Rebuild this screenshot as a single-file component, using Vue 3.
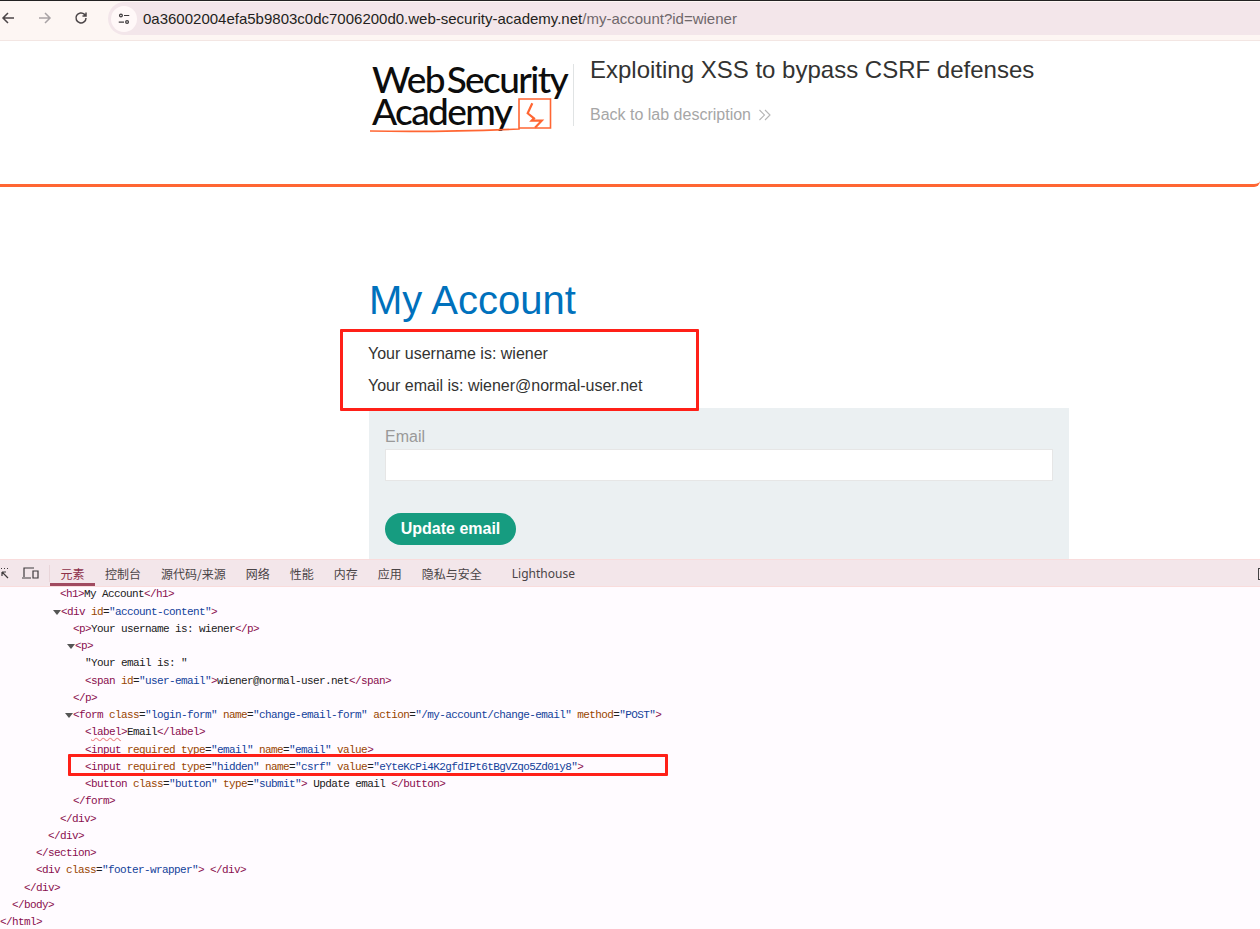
<script setup>
const tabs = ['控制台', '源代码/来源', '网络', '性能', '内存', '应用', '隐私与安全']
const t = (s) => ({ k: 'tag', s })
const a = (s) => ({ k: 'attr', s })
const v = (s) => ({ k: 'val', s })
const x = (s) => ({ k: 'txt', s })
const rows = [
  { i: 60, p: [t('<h1>'), x('My Account'), t('</h1>')] },
  { i: 61, o: 1, p: [t('<div '), a('id'), x('='), v('"account-content"'), t('>')] },
  { i: 73, p: [t('<p>'), x('Your username is: wiener'), t('</p>')] },
  { i: 75, o: 1, p: [t('<p>')] },
  { i: 85, p: [x('"Your email is: "')] },
  { i: 85, p: [t('<span '), a('id'), x('='), v('"user-email"'), t('>'), x('wiener@normal-user.net'), t('</span>')] },
  { i: 73, p: [t('</p>')] },
  { i: 73, o: 1, p: [t('<form '), a('class'), x('='), v('"login-form"'), a(' name'), x('='), v('"change-email-form"'), a(' action'), x('='), v('"/my-account/change-email"'), a(' method'), x('='), v('"POST"'), t('>')] },
  { i: 85, p: [t('<'), { k: 'tag wavy', s: 'label' }, t('>'), x('Email'), t('</label>')] },
  { i: 85, p: [t('<input '), a('required type'), x('='), v('"email"'), a(' name'), x('='), v('"email"'), a(' value'), t('>')] },
  { i: 85, p: [t('<input '), a('required type'), x('='), v('"hidden"'), a(' name'), x('='), v('"csrf"'), a(' value'), x('='), v('"eYteKcPi4K2gfdIPt6tBgVZqo5Zd01y8"'), t('>')] },
  { i: 85, p: [t('<button '), a('class'), x('='), v('"button"'), a(' type'), x('='), v('"submit"'), t('>'), x(' Update email '), t('</button>')] },
  { i: 73, p: [t('</form>')] },
  { i: 60, p: [t('</div>')] },
  { i: 48, p: [t('</div>')] },
  { i: 36, p: [t('</section>')] },
  { i: 36, p: [t('<div '), a('class'), x('='), v('"footer-wrapper"'), t('> </div>')] },
  { i: 24, p: [t('</div>')] },
  { i: 12, p: [t('</body>')] },
  { i: 0, p: [t('</html>')] },
]
</script>

<template>
  <div class="root">
    <header class="browser">
      <svg class="nav back" viewBox="0 0 14 14" width="14" height="14"><path d="M13 7H2M7 2 2 7l5 5" /></svg>
      <svg class="nav fwd" viewBox="0 0 14 14" width="14" height="14"><path d="M1 7h11M7 2l5 5-5 5" /></svg>
      <svg class="nav reload" viewBox="0 0 14 14" width="14" height="14"><path d="M12 7a5 5 0 1 1-1.5-3.6L12 5M12 1.5V5H8.5" /></svg>
      <div class="omni">
        <span class="site">
          <svg viewBox="0 0 16 16" width="14" height="14"><circle cx="4.5" cy="4" r="1.6" /><path d="M8 4h6M2 11.5h6" /><circle cx="11.5" cy="11.5" r="1.6" /></svg>
        </span>
        <span class="url">0a36002004efa5b9803c0dc7006200d0.web-security-academy.net<span class="path">/my-account?id=wiener</span></span>
      </div>
    </header>

    <main class="page">
      <section class="banner">
        <div class="logo">
          <div class="logo-text">Web Security<br />Academy</div>
          <svg class="logo-mark" viewBox="0 0 184 36" width="184" height="36">
            <path class="o1" d="M1 32c50 1 100 0 149-2V0h31.500v29H150" />
            <path class="o2" d="M163.300 4.300l-4.600 10 6.300 5-2.300 2.400h10L166 28.700" />
          </svg>
        </div>
        <div class="lab">
          <h2>Exploiting XSS to bypass CSRF defenses</h2>
          <a class="backlink">Back to lab description
            <svg viewBox="0 0 14 12" width="14" height="12"><path d="M1.500 1l5 5-5 5M7 1l5 5-5 5" /></svg>
          </a>
        </div>
      </section>
      <section class="content">
        <h1>My Account</h1>
        <p>Your username is: wiener</p>
        <p>Your email is: wiener@normal-user.net</p>
        <form class="form" @submit.prevent>
          <label>Email</label>
          <input type="email" />
          <button type="submit">Update email</button>
        </form>
      </section>
      <div class="mark mark-a"></div>
    </main>

    <section class="devtools">
      <div class="toolbar">
        <svg class="dt-ico" viewBox="0 0 12 14" width="12" height="14"><path d="M0 2.500h1M3 2.500h1M6 2.500h1M9 2.500h1M0 6h2M0 9h1M4 6l6 6M4 6h4M4 6v4" /></svg>
        <svg class="dt-ico device" viewBox="0 0 18 14" width="18" height="14"><path d="M2 11V2h10M0 12h9M11 5h5v7h-5z" /></svg>
        <span class="dt-sep"></span>
        <span class="tab active">元素</span>
        <span v-for="name in tabs" :key="name" class="tab">{{ name }}</span>
        <span class="tab light">Lighthouse</span>
        <span class="expand"></span>
      </div>
      <div class="code">
        <div v-for="(row, n) in rows" :key="n" class="row" :style="{ paddingLeft: row.i + 'px' }">
          <i v-if="row.o" class="tri"></i>
          <span v-for="(part, m) in row.p" :key="m" :class="part.k">{{ part.s }}</span>
        </div>
      </div>
      <div class="mark mark-b"></div>
    </section>
  </div>
</template>

<style>
html, body { margin: 0; background: #fff; overflow: hidden; }
</style>

<style scoped>
.root {
  width: 1260px;
  height: 929px;
  display: flex;
  flex-direction: column;
  overflow: hidden;
  font-family: "Liberation Sans", Arial, sans-serif;
  color: #333332;
}
.browser {
  height: 41px;
  box-sizing: border-box;
  flex: none;
  display: flex;
  align-items: flex-start;
  background: #fdf6f3;
  border-top: 1px solid #222;
  border-bottom: 1px solid #f3e6e3;
  padding-left: 1px;
}
.nav { margin-top: 10px; fill: none; stroke: #4c4648; stroke-width: 1.5; flex: none; }
.fwd { margin-left: 23px; stroke: #a9a3a5; }
.reload { margin-left: 22px; }
.omni {
  margin-left: 20px;
  margin-top: 1px;
  flex: 1;
  height: 33px;
  border-radius: 17px 0 0 17px;
  background: #f3e6ea;
  display: flex;
  align-items: center;
  padding-left: 3px;
}
.site {
  width: 26px;
  height: 26px;
  border-radius: 50%;
  background: #fff8f8;
  display: flex;
  align-items: center;
  justify-content: center;
}
.site svg { fill: none; stroke: #3e3a3c; stroke-width: 1.4; }
.url { margin-left: 6px; font-size: 15px; color: #231f20; }
.path { color: #6f686a; }

.page {
  position: relative;
  height: 518px;
  flex: none;
  overflow: hidden;
  background: #fff;
}
.banner {
  height: 146px;
  box-sizing: border-box;
  border-bottom: 3px solid #ff6633;
  border-bottom-right-radius: 6px;
  padding: 12px 0 0 372px;
  display: flex;
  align-items: flex-start;
}
.logo {
  position: relative;
  width: 202px;
  height: 62px;
  box-sizing: border-box;
  border-right: 1px solid #e0e3e4;
  margin-top: 11px;
  flex: none;
}
.logo-text {
  font-family: "Lato", sans-serif;
  font-weight: 500;
  font-size: 37px;
  line-height: 32px;
  letter-spacing: -1.6px;
  word-spacing: -5px;
  color: #0d0d0d;
  margin-top: -1px;
  white-space: nowrap;
}
.logo-mark { position: absolute; left: -3px; top: 35px; fill: none; overflow: visible; }
.o1 { stroke: #ff6633; stroke-width: 1.6; }
.o2 { stroke: #ff6633; stroke-width: 2.2; }
.lab { margin-left: 16px; }
.lab h2 { margin: 0; font-size: 24px; font-weight: 400; line-height: 34px; color: #333332; }
.backlink {
  display: flex;
  align-items: center;
  gap: 7px;
  margin-top: 18px;
  font-size: 16px;
  line-height: 20px;
  color: #a6a6a6;
}
.backlink svg { fill: none; stroke: #b5b5b5; stroke-width: 1.1; }

.content { margin-left: 369px; width: 700px; padding-top: 88px; }
.content h1 { margin: 0 0 19px; font-size: 40px; font-weight: 400; line-height: 50px; color: #0071bc; }
.content p { margin: 0 0 12px; font-size: 16px; line-height: 20px; color: #333332; margin-left: -1px; }
.form {
  margin-top: 12px;
  background: #ebf0f2;
  padding: 19px 16px 0;
  height: 151px;
  box-sizing: border-box;
  display: flex;
  flex-direction: column;
  align-items: flex-start;
}
.form label { font-size: 16px; line-height: 20px; color: #999; }
.form input {
  width: 668px;
  height: 32px;
  box-sizing: border-box;
  margin: 2px 0 32px;
  border: 1px solid #e6e6e6;
  background: #fff;
  padding: 0;
}
.form button {
  width: 131px;
  height: 32px;
  border: 0;
  border-radius: 16px;
  background: #169c80;
  color: #fff;
  font: 700 16px "Liberation Sans", Arial, sans-serif;
  padding: 0;
}

.mark { position: absolute; box-sizing: border-box; border: 3px solid #ff2018; border-radius: 1px; }
.mark-a { left: 340px; top: 288px; width: 359px; height: 82px; }
.mark-b { left: 68px; top: 195px; width: 600px; height: 22px; }

.devtools {
  position: relative;
  flex: 1;
  display: flex;
  flex-direction: column;
  background: #fffbff;
  overflow: hidden;
}
.toolbar {
  position: relative;
  z-index: 1;
  height: 28px;
  flex: none;
  box-sizing: border-box;
  display: flex;
  align-items: center;
  background: #f3e6ea;
  border-top: 1px solid #f9dcdc;
  border-bottom: 1px solid #f9dcdc;
  font-family: "Noto Sans CJK SC", "Noto Sans", sans-serif;
  font-size: 12px;
  color: #4a4446;
}
.dt-ico { fill: none; stroke: #3f3a3c; stroke-width: 1.2; flex: none; margin-left: -2px; }
.device { margin-left: 12px; }
.dt-sep { width: 1px; height: 17px; background: #e9d5d9; margin: 0 0 0 9px; flex: none; }
.tab { height: 100%; display: flex; align-items: center; box-sizing: border-box; margin-right: 20px; white-space: nowrap; }
.tab.active { color: #8d2f48; border-bottom: 3px solid #a04a60; padding: 3px 0 0; width: 45px; justify-content: center; margin: 0 10px 0 0; }
.tab.light { margin-left: 10px; margin-right: 0; font-family: "Noto Sans", sans-serif; }
.expand { position: absolute; right: -6px; top: 8px; width: 6px; height: 10px; border: 1px solid #444; }

.code {
  margin-top: -0.6px;
  font-family: "Liberation Mono", monospace;
  font-size: 11px;
  letter-spacing: -0.6px;
  color: #202020;
}
.row { position: relative; height: 17.25px; line-height: 17.25px; white-space: pre; }
.tri {
  position: absolute;
  width: 0;
  height: 0;
  margin-left: -8px;
  margin-top: 6px;
  border-left: 4px solid transparent;
  border-right: 4px solid transparent;
  border-top: 5px solid #555;
}
.tag { color: #8a0e4e; }
.attr { color: #994500; }
.val { color: #12419a; }
.txt { color: #202020; }
.wavy { text-decoration: underline wavy #ee8a8a; }
</style>
